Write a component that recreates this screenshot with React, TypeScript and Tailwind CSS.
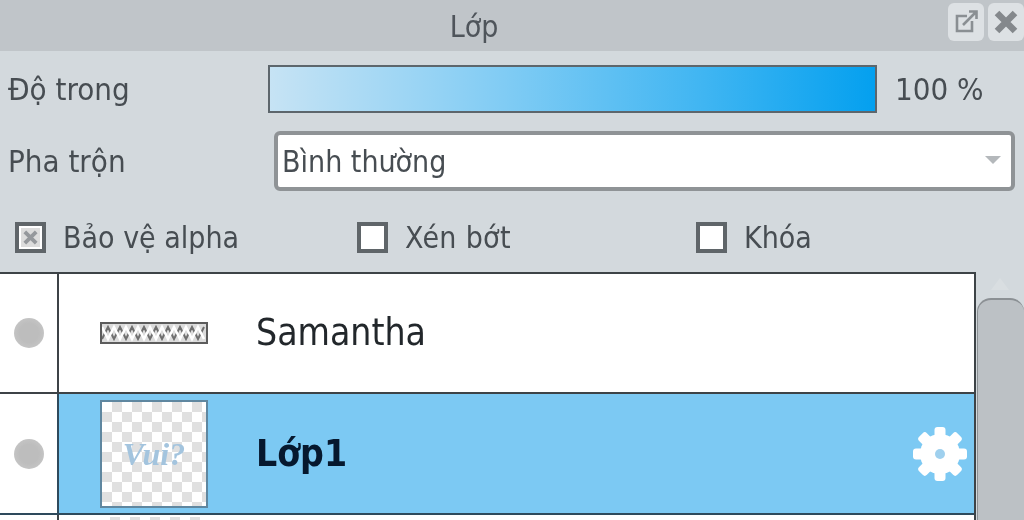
import React from 'react';

const checker =
  'bg-white bg-[conic-gradient(#e0e0e0_25%,#ffffff_0_50%,#e0e0e0_0_75%,#ffffff_0)] bg-[length:20px_20px]';

const Check: React.FC<{ label: string; checked?: boolean; className: string }> = ({
  label,
  checked,
  className,
}) => (
  <div className={`flex items-center gap-[17px] ${className}`}>
    <div className="flex h-[31px] w-[31px] items-center justify-center border-[4px] border-[#5f6569] bg-white">
      {checked && (
        <svg viewBox="0 0 20 20" className="h-[19px] w-[19px]">
          <rect width="20" height="20" fill="#dcdcdc" />
          <path d="M4 4l12 12M16 4L4 16" stroke="#95989c" strokeWidth="4" />
        </svg>
      )}
    </div>
    <span>{label}</span>
  </div>
);

const Gear = () => (
  <svg viewBox="0 0 54 54" className="h-[54px] w-[54px]">
    {[0, 45, 90, 135].map((a) => (
      <rect key={a} x="21.500" y="0" width="11" height="54" rx="3" fill="#fff" transform={`rotate(${a} 27 27)`} />
    ))}
    <circle cx="27" cy="27" r="20" fill="#fff" />
    <circle cx="27" cy="27" r="5" fill="#9fd0ee" />
  </svg>
);

const Dot = () => (
  <div className="flex w-[57px] shrink-0 items-center justify-center bg-white">
    <div className="h-[30px] w-[30px] rounded-full bg-[radial-gradient(#bdbdbd_45%,#cccccc)]" />
  </div>
);

// noisy strip standing in for the thumbnail of the Samantha layer
const StripThumb = () => (
  <div className="h-[22px] w-[108px] border-2 border-[#5c5c5c] bg-[#dcdcdc]">
    <svg viewBox="0 0 104 18" className="h-[18px] w-[104px]" fill="none" stroke="#6f6f6f" strokeWidth="2">
      <path d="M0 15L6 3l6 12 6-12 6 12 6-12 6 12 6-12 6 12 6-12 6 12 6-12 6 12 6-12 6 12 6-12 6 12 6-12" />
      <path d="M0 3l6 12 6-12 6 12 6-12 6 12 6-12 6 12 6-12 6 12 6-12 6 12 6-12 6 12 6-12 6 12 6-12 6 12" stroke="#fff" strokeWidth="2.500" />
    </svg>
  </div>
);

export default function App() {
  return (
    <div className="h-[520px] w-[1024px] overflow-hidden bg-[#d3d9dd] font-['DejaVu_Sans_Condensed','DejaVu_Sans',sans-serif] text-[30px] text-[#474d52] blur-[0.6px]">
      <div className="flex h-[51px] bg-[#c0c5c9]">
        <div className="flex-1 pt-[4px] text-center text-[#4f555b]">Lớp</div>
        <div className="flex h-[38px] w-[36px] mt-[3px] items-center justify-center rounded-[6px] bg-[#dde1e4]">
          <svg viewBox="0 0 28 28" className="h-[28px] w-[28px]" fill="none" stroke="#8a8f93" strokeWidth="2.6">
            <path d="M15 8H5v15h15V13" />
            <path d="M11 17L24 4M17 3.500h7.500v7.500" />
          </svg>
        </div>
        <div className="ml-[4px] flex h-[38px] w-[36px] mt-[3px] items-center justify-center rounded-[6px] bg-[#dde1e4]">
          <svg viewBox="0 0 24 24" className="h-[24px] w-[24px]" stroke="#84888c" strokeWidth="6.500">
            <path d="M3 3l18 18M21 3L3 21" />
          </svg>
        </div>
      </div>

      <div className="mt-[14px] flex h-[48px] items-center pl-[8px]">
        <span className="w-[260px] text-[31px]">Độ trong</span>
        <div className="h-full w-[609px] border-2 border-[#5d666c] bg-[linear-gradient(to_right,#c6e3f4,#7ecbf4_40%,#3fb5f2_72%,#04a0ef)]" />
        <span className="ml-[18px] text-[31px]">100 %</span>
      </div>

      <div className="mt-[18px] flex h-[60px] items-center pl-[8px]">
        <span className="w-[266px] text-[31px]">Pha trộn</span>
        <div className="relative flex h-full w-[741px] items-center rounded-[6px] border-[4px] border-[#8f9396] bg-white pl-[4px]">
          Bình thường
          <div className="absolute right-[10px] top-[21px] h-0 w-0 border-x-[8px] border-t-[8px] border-x-transparent border-t-[#b4b8bb]" />
        </div>
      </div>

      <div className="mt-[31px] flex h-[31px] items-center">
        <Check label="Bảo vệ alpha" checked className="ml-[15px] w-[342px]" />
        <Check label="Xén bớt" className="w-[339px] tracking-[0.3px]" />
        <Check label="Khóa" className="" />
      </div>

      <div className="mt-[19px] flex">
        <div className="w-[976px] shrink-0 border-r-2 border-t-2 border-[#3d4347]">
          <div className="flex h-[120px] border-b-2 border-[#3d4347]">
            <Dot />
            <div className="flex flex-1 items-center border-l-2 border-[#3d4347] bg-white pl-[41px]">
              <StripThumb />
              <span className="ml-[48px] text-[37px] text-[#22272b]">Samantha</span>
            </div>
          </div>
          <div className="flex h-[121px] border-b-2 border-[#2e4a5c]">
            <Dot />
            <div className="flex flex-1 items-center border-l-2 border-[#2e4a5c] bg-[#7cc9f3] pl-[41px]">
              <div className={`flex h-[108px] w-[108px] items-center justify-center border-2 border-[#5f87a0] ${checker}`}>
                <span className="font-['Liberation_Serif',serif] text-[32px] font-bold italic text-[#a3c4de]">Vui?</span>
              </div>
              <span className="ml-[48px] text-[37px] font-bold text-[#06182e]">Lớp1</span>
              <div className="ml-auto mr-[7px]">
                <Gear />
              </div>
            </div>
          </div>
          <div className="flex h-[20px]">
            <div className="w-[57px] shrink-0 bg-white" />
            <div className="flex-1 border-l-2 border-[#3d4347] bg-white pl-[41px]">
              <div className={`mt-[2px] h-[20px] w-[108px] ${checker}`} />
            </div>
          </div>
        </div>
        <div className="flex-1">
          <div className="mx-auto mt-[6px] h-0 w-0 border-x-[9px] border-b-[12px] border-x-transparent border-b-[#d9dee1]" />
          <div className="ml-[1px] mt-[8px] h-[300px] rounded-t-[14px] border-t-2 border-l border-[#8b9094] bg-[#bcc1c5]" />
        </div>
      </div>
    </div>
  );
}
